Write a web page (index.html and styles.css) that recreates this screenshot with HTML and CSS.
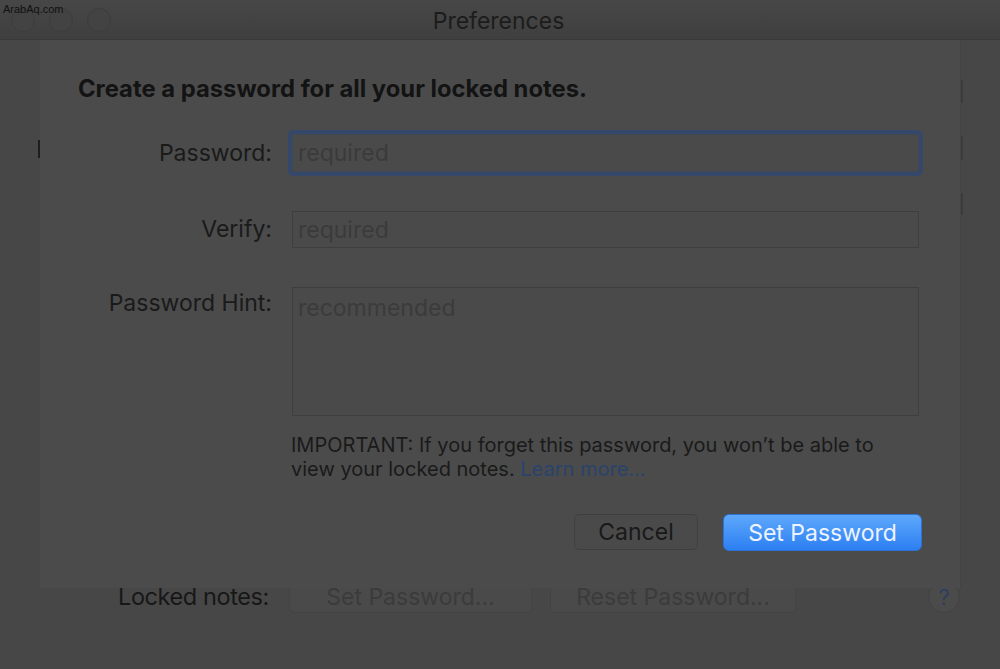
FILE: index.html
```html
<!DOCTYPE html>
<html>
<head>
<meta charset="utf-8">
<link rel="stylesheet" href="styles.css">
</head>
<body>
<div class="window">
  <div class="titlebar">
    <div class="lights">
      <span class="light"></span><span class="light"></span><span class="light"></span>
    </div>
    <div class="title">Preferences</div>
    <div class="spacer"></div>
  </div>
  <div class="content">
    <div class="behind">
      <div class="brow r1"><span class="lmark hidden"></span><span class="rmark"></span></div>
      <div class="brow r2"><span class="lmark"></span><span class="rmark"></span></div>
      <div class="brow r3"><span class="lmark hidden"></span><span class="rmark"></span></div>
      <div class="prefs-row">
        <span class="prefs-label">Locked notes:</span>
        <span class="ghost-btn setpw">Set Password...</span>
        <span class="ghost-btn resetpw">Reset Password...</span>
        <span class="help">?</span>
      </div>
    </div>
    <div class="sheet">
      <h1 class="heading">Create a password for all your locked notes.</h1>
      <div class="form">
        <label class="lbl l-pass">Password:</label>
        <div class="focus-ring"><div class="field"><span class="ph">required</span></div></div>
        <label class="lbl l-verify">Verify:</label>
        <div class="field verify"><span class="ph">required</span></div>
        <label class="lbl l-hint">Password Hint:</label>
        <div class="field hint"><span class="ph">recommended</span></div>
        <div></div>
        <p class="note">IMPORTANT: If you forget this password, you won’t be able to<br>view your locked notes. <a class="link">Learn more…</a></p>
      </div>
      <div class="actions">
        <button class="btn cancel">Cancel</button>
        <button class="btn primary">Set Password</button>
      </div>
    </div>
  </div>
</div>
<div class="watermark">ArabAq.com</div>
</body>
</html>
```

FILE: styles.css
```css
html, body {
  margin: 0;
  padding: 0;
}
body {
  width: 1000px;
  height: 669px;
  overflow: hidden;
  background: #474747;
  font-family: "Inter", "Liberation Sans", sans-serif;
  position: relative;
}
.window {
  width: 1000px;
  height: 669px;
  display: flex;
  flex-direction: column;
}
.titlebar {
  height: 39px;
  flex: 0 0 39px;
  background: linear-gradient(#474747, #3f3f3f);
  border-bottom: 1px solid #393939;
  display: grid;
  grid-template-columns: 200px 1fr 200px;
  align-items: center;
}
.lights {
  display: flex;
  gap: 14px;
  padding-left: 11px;
}
.light {
  width: 24px;
  height: 24px;
  border-radius: 50%;
  background: #434343;
  border: 1px solid #3d3d3d;
  box-sizing: border-box;
}
.title {
  text-align: center;
  font-size: 23px;
  color: #1c1c1c;
  margin-left: -3px;
  line-height: 28px;
  margin-top: 2px;
}
.content {
  flex: 1;
  position: relative;
  background: #474747;
}
.behind {
  height: 100%;
  display: flex;
  flex-direction: column;
}
.brow {
  display: flex;
  justify-content: space-between;
  padding: 0 37px 0 38px;
}
.r1 { margin-top: 40px; height: 23px; }
.r2 { margin-top: 33px; height: 24px; }
.r3 { margin-top: 33px; height: 22px; }
.lmark {
  width: 2px;
  height: 18px;
  margin-top: 4px;
  background: #1e1e1e;
}
.lmark.hidden { visibility: hidden; }
.rmark {
  width: 2px;
  background: #3c3c3c;
}
.prefs-row {
  margin-top: auto;
  margin-bottom: 56px;
  display: flex;
  align-items: center;
  padding-left: 118px;
  height: 33px;
}
.prefs-label {
  font-size: 23.5px;
  color: #171717;
  width: 155px;
  letter-spacing: -0.4px;
  white-space: nowrap;
}
.ghost-btn {
  height: 32px;
  box-sizing: border-box;
  border: 1px solid #434343;
  border-radius: 5px;
  background: #4a4a4a;
  color: #3b3b3b;
  font-size: 23px;
  display: flex;
  align-items: center;
  justify-content: center;
}
.setpw { width: 243px; margin-left: 16px; }
.resetpw { width: 246px; margin-left: 18px; }
.help {
  margin-left: 132px;
  width: 32px;
  height: 32px;
  border-radius: 50%;
  background: #4b4b4b;
  border: 1px solid #424242;
  box-sizing: border-box;
  color: #2d3f5c;
  font-size: 22px;
  display: flex;
  align-items: center;
  justify-content: center;
}
.sheet {
  position: absolute;
  left: 40px;
  top: 0;
  width: 921px;
  height: 548px;
  background: #4b4b4b;
  border-right: 1px solid #434343;
  box-sizing: border-box;
  padding: 34px 42px 0 38px;
}
.heading {
  margin: 0;
  font-size: 23.8px;
  font-weight: 700;
  color: #131313;
  line-height: 30px;
  white-space: nowrap;
}
.form {
  margin-top: 30px;
  display: grid;
  grid-template-columns: 194px 627px;
  column-gap: 20px;
  row-gap: 39px;
  align-items: start;
}
.lbl {
  text-align: right;
  font-size: 23px;
  color: #1a1a1a;
  line-height: 28px;
  white-space: nowrap;
}
.l-pass { margin-top: 5px; }
.l-verify { margin-top: 4px; }
.l-hint { margin-top: 2px; }
.focus-ring {
  margin: -4px;
  border: 4px solid #36486a;
  border-radius: 5px;
}
.field {
  height: 38px;
  box-sizing: border-box;
  border: 1px solid #3e3e3e;
  background: #4a4a4a;
  padding: 0 5px;
  display: flex;
  align-items: center;
}
.focus-ring .field { border-color: #404856; }
.field.verify { height: 37px; }
.field.hint {
  height: 129px;
  align-items: flex-start;
  padding-top: 6px;
}
.ph {
  font-size: 23px;
  color: #3b3b3b;
  line-height: 28px;
}
.note {
  margin: -22px 0 0 -1px;
  font-size: 20px;
  line-height: 24px;
  color: #1a1a1a;
  width: 640px;
  white-space: nowrap;
}
.link {
  color: #29436c;
}
.actions {
  display: flex;
  justify-content: flex-end;
  gap: 25px;
  margin-top: 33px;
  margin-right: -4px;
}
.btn {
  font-family: inherit;
  font-size: 23px;
  height: 36px;
  border-radius: 5px;
  box-sizing: border-box;
  display: flex;
  align-items: center;
  justify-content: center;
}
.cancel {
  width: 124px;
  background: #4a4a4a;
  border: 1px solid #3f3f3f;
  color: #191919;
}
.primary {
  width: 199px;
  height: 37px;
  border: 1px solid #2e72d6;
  background: linear-gradient(#5ea8fb, #2c7ff2);
  color: #eef4ff;
  font-size: 23px;
  border-radius: 6px;
}
.watermark {
  position: absolute;
  left: 3px;
  top: 3px;
  font-family: "Liberation Sans", sans-serif;
  font-size: 11px;
  color: #111;
}
```
